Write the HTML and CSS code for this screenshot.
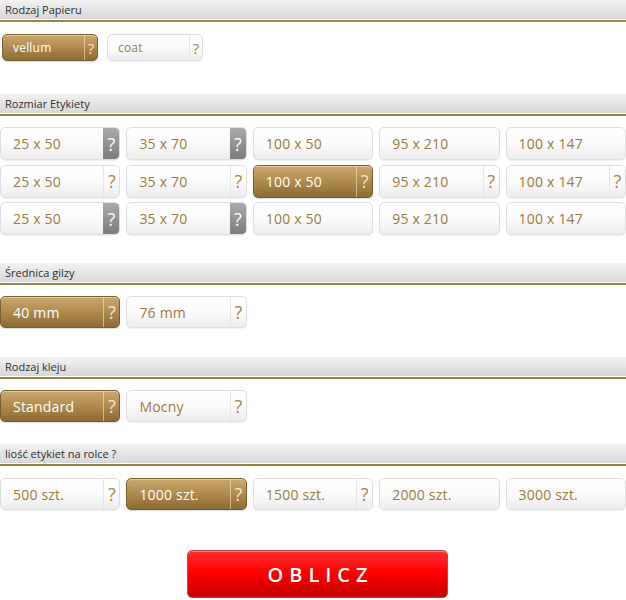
FILE: index.html
```html
<!DOCTYPE html>
<html lang="pl">
<head>
<meta charset="utf-8">
<title>Kalkulator etykiet</title>
<link rel="stylesheet" href="styles.css">
</head>
<body>
<div class="page">
  <section class="group g1">
    <h2 class="group-title">Rodzaj Papieru</h2>
    <div class="opts opts-paper">
      <div class="opt small sel"><span class="lbl">vellum</span><span class="q">?</span></div>
      <div class="opt small"><span class="lbl">coat</span><span class="q">?</span></div>
    </div>
  </section>

  <section class="group g2">
    <h2 class="group-title">Rozmiar Etykiety</h2>
    <div class="opts grid5 sizes">
      <div class="opt"><span class="lbl">25 x 50</span><span class="q gray">?</span></div>
      <div class="opt"><span class="lbl">35 x 70</span><span class="q gray">?</span></div>
      <div class="opt"><span class="lbl">100 x 50</span></div>
      <div class="opt"><span class="lbl">95 x 210</span></div>
      <div class="opt"><span class="lbl">100 x 147</span></div>

      <div class="opt"><span class="lbl">25 x 50</span><span class="q">?</span></div>
      <div class="opt"><span class="lbl">35 x 70</span><span class="q">?</span></div>
      <div class="opt sel"><span class="lbl">100 x 50</span><span class="q">?</span></div>
      <div class="opt"><span class="lbl">95 x 210</span><span class="q">?</span></div>
      <div class="opt"><span class="lbl">100 x 147</span><span class="q">?</span></div>

      <div class="opt"><span class="lbl">25 x 50</span><span class="q gray">?</span></div>
      <div class="opt"><span class="lbl">35 x 70</span><span class="q gray">?</span></div>
      <div class="opt"><span class="lbl">100 x 50</span></div>
      <div class="opt"><span class="lbl">95 x 210</span></div>
      <div class="opt"><span class="lbl">100 x 147</span></div>
    </div>
  </section>

  <section class="group g3">
    <h2 class="group-title">Średnica gilzy</h2>
    <div class="opts grid5 tall">
      <div class="opt sel"><span class="lbl">40 mm</span><span class="q">?</span></div>
      <div class="opt"><span class="lbl">76 mm</span><span class="q">?</span></div>
    </div>
  </section>

  <section class="group g4">
    <h2 class="group-title">Rodzaj kleju</h2>
    <div class="opts grid5 tall">
      <div class="opt sel"><span class="lbl">Standard</span><span class="q">?</span></div>
      <div class="opt"><span class="lbl">Mocny</span><span class="q">?</span></div>
    </div>
  </section>

  <section class="group g5">
    <h2 class="group-title">liość etykiet na rolce ?</h2>
    <div class="opts grid5 tall">
      <div class="opt"><span class="lbl">500 szt.</span><span class="q">?</span></div>
      <div class="opt sel"><span class="lbl">1000 szt.</span><span class="q">?</span></div>
      <div class="opt"><span class="lbl">1500 szt.</span><span class="q">?</span></div>
      <div class="opt"><span class="lbl">2000 szt.</span></div>
      <div class="opt"><span class="lbl">3000 szt.</span></div>
    </div>
  </section>

  <div class="submit-row">
    <button class="submit" type="button">OBLICZ</button>
  </div>
</div>
</body>
</html>
```

FILE: styles.css
```css
html, body {
  margin: 0;
  padding: 0;
  background: #fff;
}

body {
  font-family: "Open Sans", "DejaVu Sans", sans-serif;
  width: 626px;
}

.group-title {
  margin: 0;
  height: 20px;
  line-height: 19px;
  padding-left: 5px;
  font-size: 11px;
  font-weight: normal;
  color: #2e2e2e;
  background: linear-gradient(#f2f2f2, #d6d6d6);
  box-shadow: inset 0 -1px 0 #ffffff;
  border-bottom: 2px solid #9b844c;
}

.opts {
  display: flex;
}

.grid5 {
  display: grid;
  grid-template-columns: repeat(5, 1fr);
  column-gap: 6px;
}

.opts-paper {
  padding-left: 2px;
  gap: 9px;
  margin-top: 12px;
  margin-bottom: 33px;
}

.sizes {
  margin-top: 11px;
  margin-bottom: 28px;
  row-gap: 4.5px;
}

.g3 .opts, .g4 .opts {
  margin-top: 11px;
  margin-bottom: 29px;
}

.g4 .opts {
  margin-bottom: 22px;
}

.g5 .opts {
  margin-top: 12px;
}

.opt {
  box-sizing: border-box;
  display: flex;
  align-items: stretch;
  height: 33px;
  border: 1px solid #dedede;
  border-radius: 5px;
  background: linear-gradient(#ffffff 0%, #fbfbfb 50%, #ececec 100%);
  box-shadow: 0 1px 1px rgba(0, 0, 0, 0.06);
  color: #9c7b41;
  font-size: 14px;
  overflow: hidden;
}

.tall .opt {
  height: 32px;
}

.opt.small {
  width: 96px;
  height: 27px;
  font-size: 12px;
}

.lbl {
  flex: 1;
  display: flex;
  align-items: center;
  padding-left: 12px;
  letter-spacing: 0.2px;
}

.small .lbl {
  padding-left: 10px;
}

.q {
  width: 15px;
  display: flex;
  align-items: center;
  justify-content: center;
  border-left: 1px solid #e6e6e6;
  font-size: 18px;
  color: #a7864c;
}

.small .q {
  width: 12px;
  font-size: 15px;
}

.q.gray {
  width: 16px;
  border-left: 0;
  color: #ffffff;
  background: linear-gradient(#aaaaaa, #7c7c7c);
  border-radius: 0 4px 4px 0;
}

.opt.sel {
  border-color: #7a5f2c;
  background: linear-gradient(#cba86e 0%, #b28d52 45%, #8e6b34 100%);
  color: #ffffff;
  box-shadow: inset 0 1px 0 rgba(255, 240, 210, 0.5), 0 1px 1px rgba(0, 0, 0, 0.15);
}

.opt.sel .q {
  border-left: 1px solid rgba(255, 235, 200, 0.55);
  color: #f6e8cc;
}

.submit-row {
  display: flex;
  justify-content: center;
  padding-left: 9px;
  margin-top: 40px;
}

.submit {
  width: 261px;
  height: 48px;
  border: 1px solid #b84a4a;
  border-radius: 5px;
  background: linear-gradient(#ff3030 0%, #ff0000 45%, #c40000 100%);
  box-shadow: inset 0 1px 0 rgba(255, 160, 160, 0.6);
  color: #ffffff;
  font-family: "Open Sans", "DejaVu Sans", sans-serif;
  font-size: 20px;
  font-weight: 600;
  letter-spacing: 6px;
  padding: 0 0 0 6px;
  cursor: pointer;
}
```
